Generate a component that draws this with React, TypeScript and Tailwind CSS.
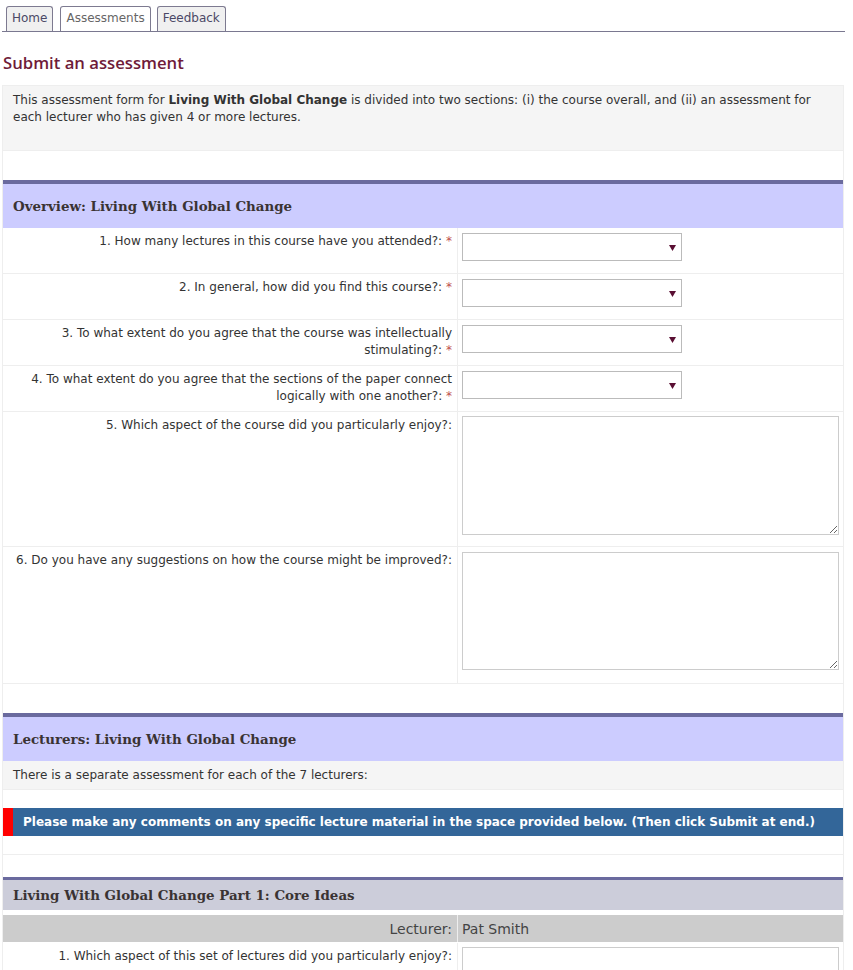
import React from "react";

const sans = "font-['DejaVu_Sans',Verdana,sans-serif]";
const serif = "font-['DejaVu_Serif',Georgia,serif]";

function Star() {
  return <span className="text-[#c0504d]"> *</span>;
}

function SelectBox() {
  return (
    <div className="mt-[1px] flex h-[28px] w-[220px] items-center justify-end border border-[#bbbbbb] bg-white pr-[5px]">
      <svg width="7" height="7" viewBox="0 0 7 7">
        <path d="M0 1h7L3.5 7z" fill="#5a0f33" />
      </svg>
    </div>
  );
}

function Row({
  label,
  height,
  children,
}: {
  label: React.ReactNode;
  height: string;
  children: React.ReactNode;
}) {
  return (
    <div className={`flex border-b border-[#eeeeee] ${height}`}>
      <div className="w-[455px] shrink-0 border-r border-[#eeeeee] pr-[5px] pt-[5px] text-right leading-[17px]">
        {label}
      </div>
      <div className="flex-1 px-[4px] pt-[4px]">{children}</div>
    </div>
  );
}

function SectionHeader({ title }: { title: string }) {
  return (
    <div className="border-t-4 border-[#6a6a9e] bg-[#ccccff]">
      <div
        className={`${serif} flex h-[44px] items-center pl-[10px] text-[13.4px] font-bold text-[#3a3333]`}
      >
        {title}
      </div>
    </div>
  );
}

export default function App() {
  return (
    <div className={`${sans} min-h-[970px] bg-white text-[12px] text-[#333333]`}>
      <div className="ml-[2px] flex w-[843px] items-end gap-[6px] border-b border-[#7a7890] pl-[4px] pt-[6px]">
        <div className="h-[25px] rounded-t-[3px] border border-b-0 border-[#7d7a90] bg-[#f0f0f0] px-[5px] leading-[23px] text-[#4b4866]">
          Home
        </div>
        <div className="ml-[1px] h-[25px] rounded-t-[3px] border border-b-0 border-[#7d7a90] bg-white px-[5px] leading-[23px] text-[#666666]">
          Assessments
        </div>
        <div className="h-[25px] rounded-t-[3px] border border-b-0 border-[#7d7a90] bg-[#f0f0f0] px-[5px] leading-[23px] text-[#4b4866]">
          Feedback
        </div>
      </div>

      <h1 className="ml-[3px] mt-[19px] font-['Open_Sans',sans-serif] text-[16.7px] font-semibold leading-[24px] text-[#6f1b39]">
        Submit an assessment
      </h1>

      <div className="ml-[2px] mt-[10px] w-[842px] border-x border-[#eeeeee]">
        <div className="border-y border-[#eeeeee] bg-[#f5f5f5] px-[10px] pb-[24px] pt-[6px] leading-[17px]">
          This assessment form for <b>Living With Global Change</b> is divided
          into two sections: (i) the course overall, and (ii) an assessment for
          <br />
          each lecturer who has given 4 or more lectures.
        </div>
        <div className="h-[29px]" />

        <SectionHeader title="Overview: Living With Global Change" />
        <Row
          height="h-[46px]"
          label={
            <>
              1. How many lectures in this course have you attended?:
              <Star />
            </>
          }
        >
          <SelectBox />
        </Row>
        <Row
          height="h-[46px]"
          label={
            <>
              2. In general, how did you find this course?:
              <Star />
            </>
          }
        >
          <SelectBox />
        </Row>
        <Row
          height="h-[46px]"
          label={
            <>
              3. To what extent do you agree that the course was intellectually
              <br />
              stimulating?:
              <Star />
            </>
          }
        >
          <SelectBox />
        </Row>
        <Row
          height="h-[46px]"
          label={
            <>
              4. To what extent do you agree that the sections of the paper
              connect
              <br />
              logically with one another?:
              <Star />
            </>
          }
        >
          <SelectBox />
        </Row>
        <Row
          height="h-[135px]"
          label="5. Which aspect of the course did you particularly enjoy?:"
        >
          <textarea className="block h-[119px] w-full border border-[#cccccc] bg-white" />
        </Row>
        <Row
          height="h-[137px]"
          label="6. Do you have any suggestions on how the course might be improved?:"
        >
          <textarea className="mt-[1px] block h-[118px] w-full border border-[#cccccc] bg-white" />
        </Row>
        <div className="h-[29px]" />

        <SectionHeader title="Lecturers: Living With Global Change" />
        <div className="flex h-[29px] items-center border-b border-[#eeeeee] bg-[#f5f5f5] pl-[10px]">
          There is a separate assessment for each of the 7 lecturers:
        </div>
        <div className="h-[18px]" />
        <div className="flex h-[28px] items-stretch bg-[#336699]">
          <div className="w-[10px] bg-[#ff0000]" />
          <div className="flex items-center pl-[10px] text-[12px] font-bold text-white">
            Please make any comments on any specific lecture material in the
            space provided below. (Then click Submit at end.)
          </div>
        </div>
        <div className="h-[19px] border-b border-[#eeeeee]" />
        <div className="h-[22px]" />

        <div className="border-t-[3px] border-[#6a6a9e] bg-[#cccdda]">
          <div
            className={`${serif} flex h-[30px] items-center pl-[10px] text-[13.4px] font-bold text-[#3a3333]`}
          >
            Living With Global Change Part 1: Core Ideas
          </div>
        </div>
        <div className="h-[5px]" />
        <div className="flex h-[28px] border-b border-white bg-[#cccccc] text-[14px] text-[#444444]">
          <div className="flex w-[455px] shrink-0 items-center justify-end border-r border-[#eeeeee] pr-[5px] pt-[2px]">
            Lecturer:
          </div>
          <div className="flex items-center pl-[4px] pt-[2px]">Pat Smith</div>
        </div>
        <Row
          height="h-[130px]"
          label="1. Which aspect of this set of lectures did you particularly enjoy?:"
        >
          <textarea className="block h-[119px] w-full border border-[#cccccc] bg-white" />
        </Row>
      </div>
    </div>
  );
}
